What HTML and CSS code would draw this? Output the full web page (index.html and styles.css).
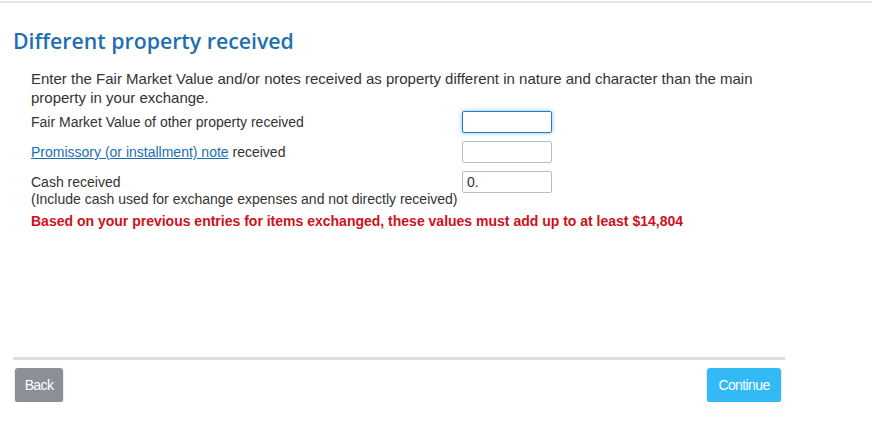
FILE: index.html
```html
<!DOCTYPE html>
<html lang="en">
<head>
    <meta charset="UTF-8">
    <meta name="viewport" content="width=device-width, initial-scale=1.0">
    <title>Different property received</title>
    <link rel="stylesheet" href="styles.css">
</head>
<body>

    <div class="page">
        <h1 class="page-title">Different property received</h1>

        <div class="form-body">
            <p class="intro">Enter the Fair Market Value and/or notes received as property different in nature and character than the main property in your exchange.</p>

            <div class="field-row">
                <label class="field-label" for="fmv">Fair Market Value of other property received</label>
                <input type="text" id="fmv" class="field-input focused">
            </div>

            <div class="field-row">
                <label class="field-label" for="note"><a href="javascript:void(0);" class="help-link">Promissory (or installment) note</a> received</label>
                <input type="text" id="note" class="field-input">
            </div>

            <div class="field-row cash-row">
                <label class="field-label" for="cash">Cash received<br>(Include cash used for exchange expenses and not directly received)</label>
                <input type="text" id="cash" class="field-input" value="0.">
            </div>

            <p class="warning">Based on your previous entries for items exchanged, these values must add up to at least $14,804</p>
        </div>

        <div class="footer">
            <button class="btn btn-back">Back</button>
            <button class="btn btn-continue">Continue</button>
        </div>
    </div>

</body>
</html>
```

FILE: styles.css
```css
body {
    margin: 0;
    padding: 0;
    font-family: "Liberation Sans", Arial, sans-serif;
    color: #333;
    background-color: white;
    border-top: 2px solid #e2e2e2;
    margin-top: 1px;
}

.page {
    width: 772px;
    padding: 0 0 0 13px;
}

.page-title {
    font-family: "Open Sans", "Liberation Sans", sans-serif;
    font-weight: 600;
    font-size: 21.3px;
    color: #1f6fb1;
    margin: 23px 0 14px 0;
}

.form-body {
    padding-left: 18px;
    height: 288px;
}

.intro {
    font-size: 15px;
    line-height: 19px;
    margin: 0 0 1px 0;
}

.field-row {
    display: flex;
    align-items: flex-start;
    height: 30px;
    font-size: 14px;
}

.field-label {
    width: 431px;
    padding-top: 6px;
    line-height: 17px;
}

.cash-row {
    height: auto;
}

.help-link {
    color: #1b6fb0;
}

.field-input {
    box-sizing: border-box;
    width: 90px;
    height: 22px;
    margin-top: 3px;
    border: 1px solid #bdbdbd;
    border-radius: 2px;
    padding: 1px 4px;
    font-family: "Liberation Sans", Arial, sans-serif;
    font-size: 14px;
    color: #333;
}

.field-input.focused {
    border-color: #2b7bb5;
    box-shadow: 0 0 4px #6cc3f2;
}

.warning {
    color: #d0101b;
    font-weight: bold;
    font-size: 14px;
    margin: 5px 0 0 0;
}

.footer {
    border-top: 3px solid #dedede;
    display: flex;
    justify-content: space-between;
    padding-top: 8px;
}

.btn {
    border: none;
    border-radius: 3px;
    color: white;
    font-family: "Liberation Sans", Arial, sans-serif;
    font-size: 14px;
    letter-spacing: -0.6px;
    height: 34px;
    box-shadow: 0 1px 2px rgba(0, 0, 0, 0.3);
    cursor: pointer;
}

.btn-back {
    background-color: #8b9098;
    width: 48px;
    margin-left: 2px;
}

.btn-continue {
    background-color: #33b9f5;
    width: 74px;
    margin-right: 4px;
}
```
